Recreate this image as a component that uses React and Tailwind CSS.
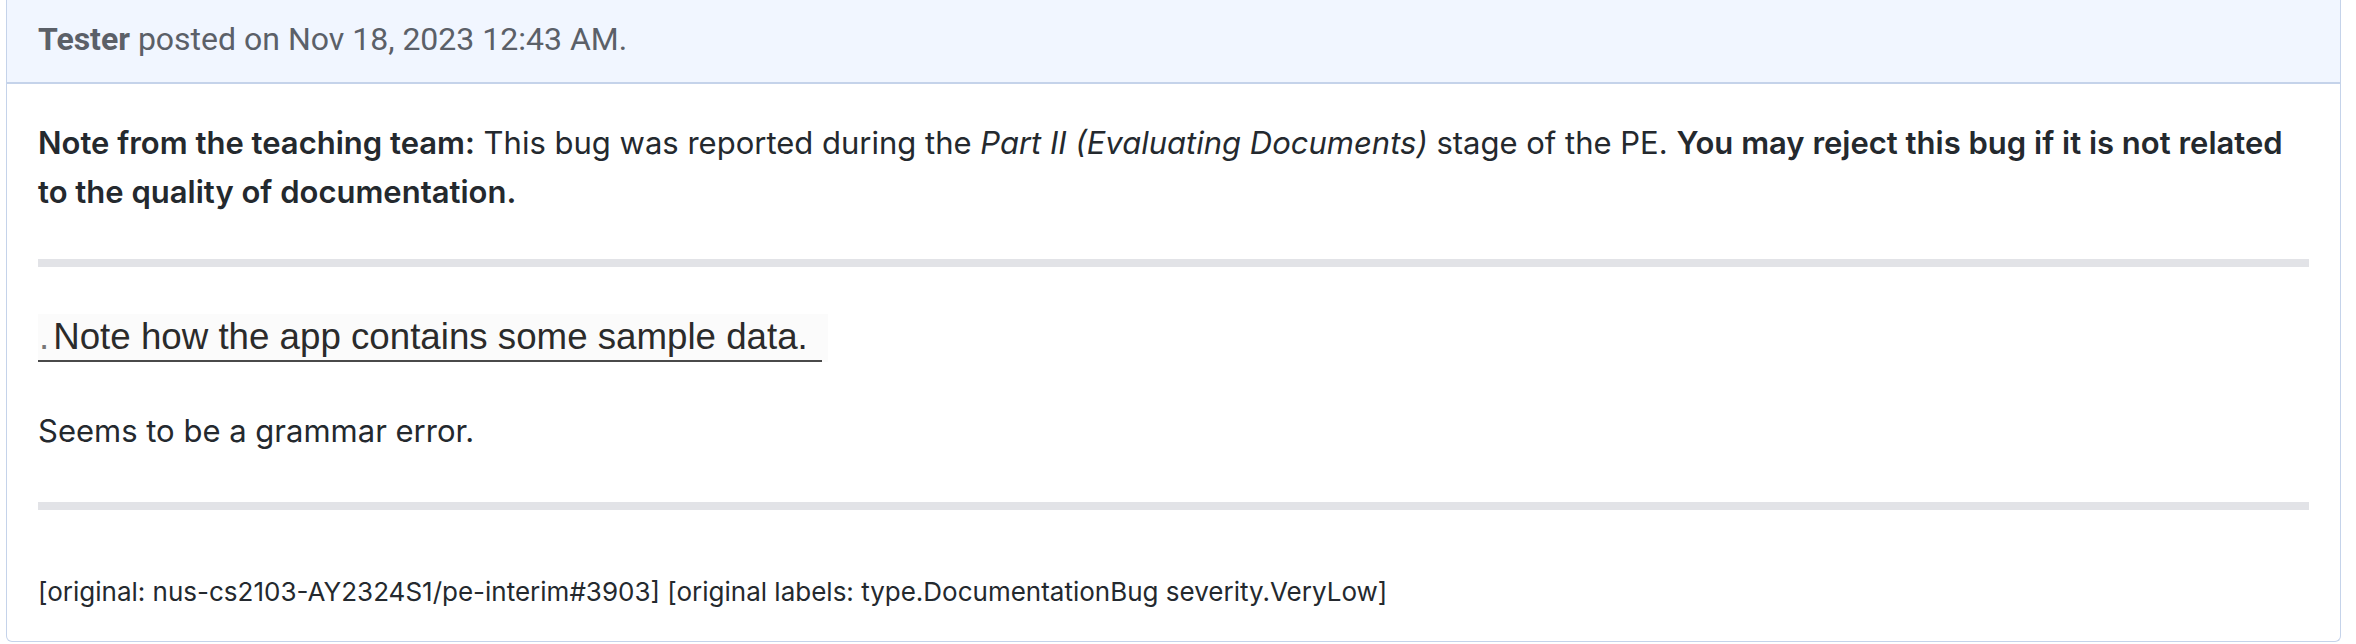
export default function App() {
  return (
    <div className="w-[2356px] h-[644px] bg-white pl-[6px] pr-[15px] overflow-hidden">
      <div className="border border-t-0 border-[#c5d3ea] rounded-b-[6px] h-[642px] flex flex-col">
        <div className="h-[84px] bg-[#f1f6ff] border-b-2 border-[#c5d3ea] flex items-center pl-[31px] pb-[5px] shrink-0">
          <span className="text-[32px] text-[#5b6068]" style={{ fontFamily: "Roboto, 'Noto Sans', sans-serif" }}>
            <span className="font-bold">Tester</span> posted on Nov 18, 2023 12:43 AM.
          </span>
        </div>
        <div
          className="px-[31px] pt-[34px] text-[#24292e] flex flex-col"
          style={{ fontFamily: "Inter, 'Noto Sans', sans-serif" }}
        >
          <p className="text-[31px] leading-[49px] pr-[20px]">
            <span className="font-semibold">Note from the teaching team:</span> This bug was reported during the{" "}
            <span className="italic">Part II (Evaluating Documents)</span> stage of the PE.{" "}
            <span className="font-semibold">You may reject this bug if it is not related to the quality of documentation.</span>
          </p>
          <div className="mt-[43px] h-[8px] bg-[#e2e3e7]" />
          <div className="mt-[47px] w-[790px] h-[48px] bg-[#fbfbfb] flex flex-col">
            <div
              className="flex-1 flex items-center pl-[1px] text-[36.7px] text-[#2b2b2b] overflow-hidden whitespace-nowrap"
              style={{ fontFamily: "'Liberation Sans', Arial, sans-serif" }}
            >
              <span className="text-[#777] mr-[4px]">.</span>Note how the app contains some sample data.
            </div>
            <div className="h-[2px] w-[784px] bg-[#4a4a4a]" />
          </div>
          <p className="mt-[44px] text-[31px] leading-[49px]">Seems to be a grammar error.</p>
          <div className="mt-[47px] h-[8px] bg-[#e2e3e7]" />
          <p className="mt-[64px] text-[26px] leading-[36px]">
            [original: nus-cs2103-AY2324S1/pe-interim#3903] [original labels: type.DocumentationBug severity.VeryLow]
          </p>
        </div>
      </div>
    </div>
  );
}
